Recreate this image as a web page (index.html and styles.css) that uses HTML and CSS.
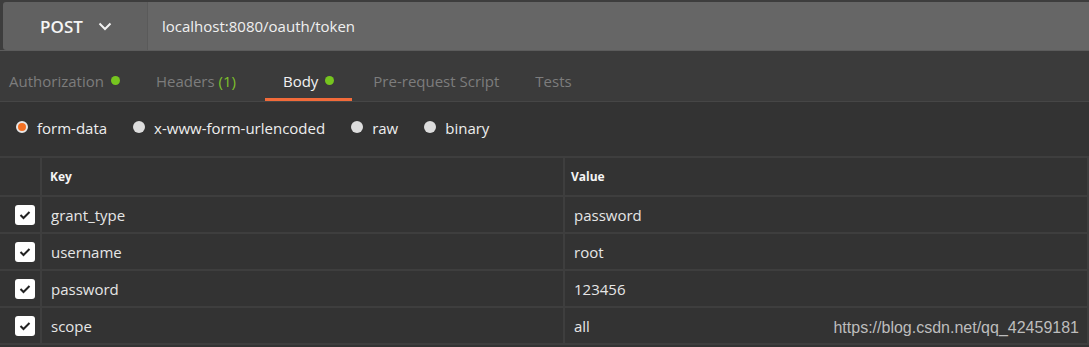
FILE: index.html
```html
<!DOCTYPE html>
<html>
<head>
    <meta charset="utf-8">
    <link rel="stylesheet" href="styles.css">
</head>
<body>
<div id="requestbar">
    <div class="method">POST
        <svg class="chevron" width="14" height="9" viewBox="0 0 14 9"><path d="M1.5 1.5 L7 7 L12.5 1.5" fill="none" stroke="#f2f2f2" stroke-width="2"/></svg>
    </div>
    <div class="url">localhost:8080/oauth/token</div>
</div>

<div id="tabs">
    <div class="tab first">Authorization<span class="dot"></span></div>
    <div class="tab">Headers <span class="count">(1)</span></div>
    <div class="tab active">Body<span class="dot"></span></div>
    <div class="tab">Pre-request Script</div>
    <div class="tab">Tests</div>
</div>

<div id="bodytypes">
    <label class="radio"><span class="circle on"></span>form-data</label>
    <label class="radio"><span class="circle"></span>x-www-form-urlencoded</label>
    <label class="radio"><span class="circle"></span>raw</label>
    <label class="radio"><span class="circle"></span>binary</label>
</div>

<div id="params">
    <div class="row head">
        <div class="cell check"></div>
        <div class="cell key">Key</div>
        <div class="cell value">Value</div>
    </div>
    <div class="row">
        <div class="cell check"><span class="box"><svg width="12" height="10" viewBox="0 0 12 10"><path d="M1.5 5 L4.5 8 L10.5 2" fill="none" stroke="#222" stroke-width="2"/></svg></span></div>
        <div class="cell key">grant_type</div>
        <div class="cell value">password</div>
    </div>
    <div class="row">
        <div class="cell check"><span class="box"><svg width="12" height="10" viewBox="0 0 12 10"><path d="M1.5 5 L4.5 8 L10.5 2" fill="none" stroke="#222" stroke-width="2"/></svg></span></div>
        <div class="cell key">username</div>
        <div class="cell value">root</div>
    </div>
    <div class="row">
        <div class="cell check"><span class="box"><svg width="12" height="10" viewBox="0 0 12 10"><path d="M1.5 5 L4.5 8 L10.5 2" fill="none" stroke="#222" stroke-width="2"/></svg></span></div>
        <div class="cell key">password</div>
        <div class="cell value">123456</div>
    </div>
    <div class="row">
        <div class="cell check"><span class="box"><svg width="12" height="10" viewBox="0 0 12 10"><path d="M1.5 5 L4.5 8 L10.5 2" fill="none" stroke="#222" stroke-width="2"/></svg></span></div>
        <div class="cell key">scope</div>
        <div class="cell value">all</div>
    </div>
    <div class="watermark">https://blog.csdn.net/qq_42459181</div>
</div>
</body>
</html>
```

FILE: styles.css
```css
body {
    margin: 0;
    padding: 0;
    background-color: #333333;
    color: #e6e6e6;
    font-family: 'Open Sans', 'Noto Sans', sans-serif;
    font-size: 15px;
    width: 1089px;
    height: 347px;
    overflow: hidden;
}

/* request bar */

#requestbar {
    display: flex;
    height: 48px;
    padding-top: 2px;
    background-color: #3d3d3d;
    border-bottom: 1px solid #5c5c5c;
}

.method {
    width: 144px;
    margin-left: 3px;
    background-color: #616161;
    border-radius: 3px 0 0 3px;
    display: flex;
    align-items: center;
    justify-content: center;
    gap: 15px;
    color: #f5f5f5;
    font-weight: 600;
    font-size: 17px;
    padding-left: 2px;
    box-sizing: border-box;
}

.url {
    flex: 1;
    background-color: #666666;
    border-left: 1px solid #5a5a5a;
    display: flex;
    align-items: center;
    padding-left: 14px;
    color: #f0f0f0;
}

/* tabs */

#tabs {
    display: flex;
    height: 50px;
    background-color: #3b3b3b;
    border-bottom: 1px solid #464646;
}

.tab {
    display: flex;
    align-items: center;
    padding: 12px 18px 0 18px;
    color: #7d7d7d;
    border-bottom: 3px solid transparent;
    white-space: pre;
}
.tab.first {
    padding-left: 9px;
}
.tab.active {
    color: #f2f2f2;
    border-bottom-color: #f26b3a;
    margin: 0 3px 0 11px;
}

.dot {
    width: 9px;
    height: 9px;
    border-radius: 50%;
    background-color: #76c51f;
    margin-left: 7px;
}

.count {
    color: #7ec02b;
}

/* body types */

#bodytypes {
    display: flex;
    align-items: center;
    height: 52px;
    padding-left: 16px;
    padding-bottom: 2px;
    gap: 26px;
}

.radio {
    display: flex;
    align-items: center;
    color: #eeeeee;
    gap: 9px;
}

.circle {
    width: 12px;
    height: 12px;
    border-radius: 50%;
    background-color: #dddddd;
    box-sizing: border-box;
    margin-top: -3px;
}
.circle.on {
    background-color: #f47023;
    border: 2px solid #e8e8e8;
}

/* params table */

#params {
    position: relative;
    width: 1087px;
    border-top: 2px solid #3e3e3e;
    border-right: 2px solid #3e3e3e;
}

.row {
    display: flex;
    height: 35px;
    border-bottom: 2px solid #3e3e3e;
}
.row.head {
    height: 37px;
    font-size: 12px;
    font-weight: 700;
    color: #f5f5f5;
}

.cell {
    display: flex;
    align-items: center;
    box-sizing: border-box;
}
.cell.check {
    width: 40px;
    padding-left: 15px;
}
.cell.key {
    width: 523px;
    border-left: 2px solid #3e3e3e;
    padding-left: 9px;
}
.row.head .cell.key {
    padding-left: 8px;
}
.cell.value {
    flex: 1;
    border-left: 2px solid #3e3e3e;
    padding-left: 9px;
}
.row.head .cell.value {
    padding-left: 6px;
}

.box {
    width: 20px;
    height: 20px;
    border-radius: 3px;
    background-color: #ffffff;
    display: flex;
    align-items: center;
    justify-content: center;
    margin-top: 1px;
}

.watermark {
    position: absolute;
    right: 8px;
    bottom: 8px;
    font-family: 'Liberation Sans', Arial, sans-serif;
    font-size: 16px;
    color: #bdbdbd;
}
```
